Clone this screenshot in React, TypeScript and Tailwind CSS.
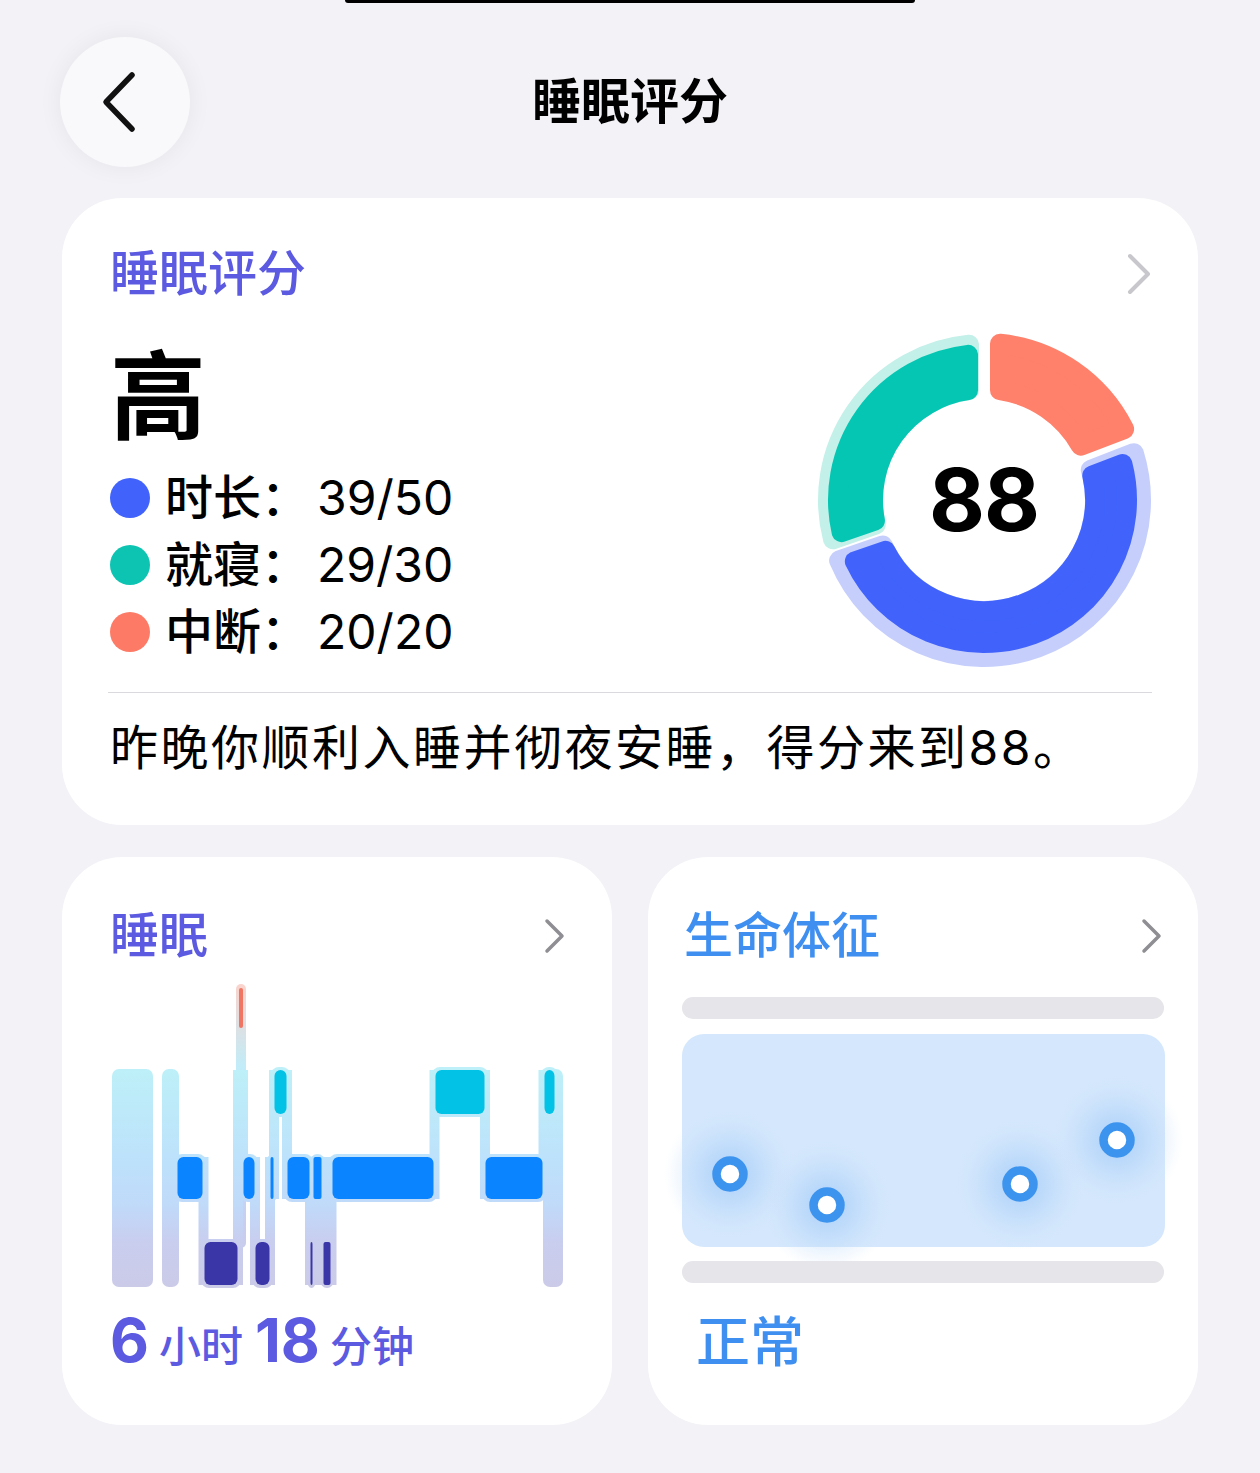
import React from "react";

const FONT = "font-['Inter','Noto_Sans_CJK_SC',sans-serif]";

// ---------- score ring ----------
const C = 170;

function pt(theta: number, d: number, R: number): [number, number] {
  const t = (theta * Math.PI) / 180;
  const along = Math.sqrt(R * R - d * d);
  return [
    C + along * Math.sin(t) + d * Math.cos(t),
    C - along * Math.cos(t) + d * Math.sin(t),
  ];
}

function angOf(p: [number, number]) {
  const a = (Math.atan2(p[0] - C, -(p[1] - C)) * 180) / Math.PI;
  return (a + 360) % 360;
}

function sector(a0: number, a1: number, rIn: number, rOut: number, d0: number, d1: number) {
  const p1 = pt(a0, d0, rOut);
  const p2 = pt(a1, -d1, rOut);
  const p3 = pt(a1, -d1, rIn);
  const p4 = pt(a0, d0, rIn);
  const so = (angOf(p2) - angOf(p1) + 360) % 360;
  const si = (angOf(p3) - angOf(p4) + 360) % 360;
  const f = (p: [number, number]) => `${p[0].toFixed(2)} ${p[1].toFixed(2)}`;
  return `M${f(p1)} A${rOut} ${rOut} 0 ${so > 180 ? 1 : 0} 1 ${f(p2)} L${f(p3)} A${rIn} ${rIn} 0 ${si > 180 ? 1 : 0} 0 ${f(p4)} Z`;
}

function ScoreRing() {
  const k = 10;
  const segs = [
    // halos
    { d: sector(251, 360, 101 + k, 166 - k, 12, 15), c: "#c3f0e8" },
    { d: sector(69, 251, 101 + k, 167 - k, 10, 10), c: "#c6cffc" },
    // solid parts
    { d: sector(251, 360, 101 + k, 156 - k, 6 + k, 6 + k), c: "#05c6b2" },
    { d: sector(0, 69, 101 + k, 167 - k, 6 + k, 6 + k), c: "#ff806b" },
    { d: sector(69, 251, 101 + k, 153 - k, 6 + k, 6 + k), c: "#4163fc" },
  ];
  return (
    <div className="relative mr-[-4px] h-[340px] w-[340px] shrink-0">
      <svg width="340" height="340" viewBox="0 0 340 340">
        {segs.map((s, i) => (
          <path key={i} d={s.d} fill={s.c} stroke={s.c} strokeWidth={k * 2} strokeLinejoin="round" />
        ))}
      </svg>
      <div className="absolute inset-0 flex items-center justify-center">
        <span className="text-[86px] font-bold leading-none tracking-[-1px] text-black">88</span>
      </div>
    </div>
  );
}

// ---------- sleep chart ----------
type Lv = "A" | "B" | "C" | "D";
const LV: Record<Lv, [number, number]> = {
  A: [8, 48],
  B: [90, 134],
  C: [177, 219],
  D: [262, 305],
};
const FILL: Record<Lv, string> = {
  A: "#f07563",
  B: "#02c2e6",
  C: "#0a84ff",
  D: "#3a36a8",
};

const blocks: [number, number, Lv][] = [
  [67, 93, "C"],
  [94, 128, "D"],
  [128, 133, "A"],
  [133, 145, "C"],
  [145, 160, "D"],
  [160, 164, "C"],
  [164, 177, "B"],
  [177, 200, "C"],
  [200, 203, "D"],
  [203, 212, "C"],
  [213, 221, "D"],
  [222, 324, "C"],
  [325, 375, "B"],
  [375, 433, "C"],
  [434, 445, "B"],
];

function SleepChart() {
  const connectors = blocks.slice(0, -1).map((b, i) => {
    const n = blocks[i + 1];
    const x = (b[1] + n[0]) / 2;
    const top = Math.min(LV[b[2]][0], LV[n[2]][0]);
    const bot = Math.max(LV[b[2]][1], LV[n[2]][1]);
    return { x, top: Math.max(top, 90), bot };
  });
  return (
    <svg width="455" height="310" viewBox="0 0 455 310" className="mt-[14px] overflow-visible">
      <defs>
        <linearGradient id="lt" gradientUnits="userSpaceOnUse" x1="0" y1="89" x2="0" y2="307">
          <stop offset="0" stopColor="#bdf0f8" />
          <stop offset="0.4" stopColor="#bde2fb" />
          <stop offset="0.62" stopColor="#c0dafa" />
          <stop offset="0.8" stopColor="#c9cdee" />
          <stop offset="1" stopColor="#cbcbe8" />
        </linearGradient>
        <linearGradient id="rd" gradientUnits="userSpaceOnUse" x1="0" y1="4" x2="0" y2="307">
          <stop offset="0" stopColor="#fbd3cc" />
          <stop offset="0.27" stopColor="#c2ecf8" />
          <stop offset="0.45" stopColor="#bde2fb" />
          <stop offset="0.62" stopColor="#c0dafa" />
          <stop offset="0.8" stopColor="#c9cdee" />
          <stop offset="1" stopColor="#cbcbe8" />
        </linearGradient>
      </defs>
      {/* columns */}
      <rect x="2" y="89" width="41" height="218" rx="7" fill="url(#lt)" />
      <rect x="52" y="89" width="17" height="218" rx="7" fill="url(#lt)" />
      <rect x="433" y="89" width="20" height="218" rx="7" fill="url(#lt)" />
      <rect x="126" y="4" width="10" height="264" rx="5" fill="url(#rd)" />
      {/* halos */}
      {blocks.map(([a, b, l], i) =>
        l === "A" ? null : (
          <rect key={`h${i}`} x={a - 3} y={LV[l][0] - 3} width={b - a + 6} height={LV[l][1] - LV[l][0] + 6} rx="8" fill="url(#lt)" />
        )
      )}
      {connectors.map((c, i) => (
        <rect key={`c${i}`} x={c.x - 5} y={c.top} width="10" height={c.bot - c.top} fill="url(#lt)" />
      ))}
      {/* blocks */}
      {blocks.map(([a, b, l], i) =>
        l === "A" ? (
          <rect key={`b${i}`} x="129" y="8" width="4" height="40" rx="2" fill={FILL.A} />
        ) : (
          <rect
            key={`b${i}`}
            x={a + 0.5}
            y={LV[l][0]}
            width={Math.max(b - a - 1, 2)}
            height={LV[l][1] - LV[l][0]}
            rx={b - a > 10 ? 6 : 2}
            fill={FILL[l]}
          />
        )
      )}
    </svg>
  );
}

// ---------- vitals ----------
const dots: [number, number][] = [
  [48, 140],
  [145, 171],
  [338, 150],
  [435, 106],
];

function VitalsPanel() {
  return (
    <svg width="483" height="213" viewBox="0 0 483 213" className="mt-[15px] overflow-visible">
      <defs>
        <radialGradient id="glow">
          <stop offset="0" stopColor="#9fc8f8" stopOpacity="0.85" />
          <stop offset="0.5" stopColor="#b5d6fa" stopOpacity="0.5" />
          <stop offset="1" stopColor="#d4e7fc" stopOpacity="0" />
        </radialGradient>
      </defs>
      <rect x="0" y="0" width="483" height="213" rx="22" fill="#d4e7fc" />
      {dots.map(([x, y], i) => (
        <circle key={`g${i}`} cx={x} cy={y} r="66" fill="url(#glow)" />
      ))}
      {dots.map(([x, y], i) => (
        <circle key={`d${i}`} cx={x} cy={y} r="13.5" fill="#ffffff" stroke="#3d94ef" strokeWidth="8.5" />
      ))}
    </svg>
  );
}

function Chevron({ color, w }: { color: string; w: number }) {
  return (
    <svg width="26" height="44" viewBox="0 0 26 44" fill="none">
      <path d="M4 4 L22 22 L4 40" stroke={color} strokeWidth={w} strokeLinecap="round" strokeLinejoin="round" />
    </svg>
  );
}

function SmallChevron() {
  return (
    <svg width="22" height="36" viewBox="0 0 22 36" fill="none">
      <path d="M4 3 L19 18 L4 33" stroke="#8e8e93" strokeWidth="3.5" strokeLinecap="round" strokeLinejoin="round" />
    </svg>
  );
}

const legend = [
  { c: "bg-[#4163fc]", k: "时长", v: "39/50" },
  { c: "bg-[#0dc4b3]", k: "就寝", v: "29/30" },
  { c: "bg-[#fd7b66]", k: "中断", v: "20/20" },
];

export default function App() {
  return (
    <div className={`min-h-[1473px] w-[1260px] bg-[#f2f2f7] ${FONT} text-black`}>
      <div className="flex justify-center">
        <div className="h-[3px] w-[570px] rounded-b-[3px] bg-black" />
      </div>

      {/* header */}
      <header className="flex h-[195px] items-start px-[60px] pt-[34px]">
        <button className="flex h-[130px] w-[130px] items-center justify-center rounded-full bg-[#f9f9fb] shadow-[0_0_24px_rgba(0,0,0,0.06)]">
          <svg width="40" height="62" viewBox="0 0 40 62" fill="none" className="ml-[-10px]">
            <path d="M32 4 L6 31 L32 58" stroke="#111" strokeWidth="5.5" strokeLinecap="round" strokeLinejoin="round" />
          </svg>
        </button>
        <h1 className="flex h-[130px] flex-1 items-center justify-center text-[49px] font-semibold">睡眠评分</h1>
        <div className="w-[130px]" />
      </header>

      {/* score card */}
      <section className="mx-[62px] h-[627px] rounded-[60px] bg-white px-[48px] pt-[46px]">
        <div className="flex h-[60px] items-center justify-between">
          <h2 className="text-[49px] font-medium leading-[60px] text-[#5b5ae0]">睡眠评分</h2>
          <div className="mr-[-2px]">
            <Chevron color="#c7c7cc" w={4} />
          </div>
        </div>
        <div className="mt-[26px] flex h-[340px] justify-between">
          <div className="flex flex-col">
            <div className="mt-[18px] text-[96px] font-bold leading-[96px]">高</div>
            <div className="mt-[20px] flex flex-col">
              {legend.map((l) => (
                <div key={l.k} className="flex h-[67px] items-center">
                  <span className={`h-[40px] w-[40px] rounded-full ${l.c}`} />
                  <span className="ml-[15px] text-[48px] font-medium">{l.k}：</span>
                  <span className="ml-[8px] text-[48px]">{l.v}</span>
                </div>
              ))}
            </div>
          </div>
          <ScoreRing />
        </div>
        <div className="mx-[-2px] mt-[22px] border-t border-[#d9d9de]" />
        <p className="mt-[25px] text-[48px] leading-[60px] tracking-[2.5px]">昨晚你顺利入睡并彻夜安睡，得分来到88。</p>
      </section>

      {/* bottom cards */}
      <div className="mx-[62px] mt-[32px] flex gap-[36px]">
        <section className="flex h-[568px] w-[550px] flex-col rounded-[60px] bg-white pl-[48px] pr-[47px] pt-[49px]">
          <div className="flex h-[60px] items-center justify-between">
            <h2 className="text-[49px] font-medium leading-[60px] text-[#5b5ae0]">睡眠</h2>
            <SmallChevron />
          </div>
          <SleepChart />
          <div className="mt-[14px] flex items-baseline text-[#5b5ae0]">
            <span className="text-[60px] font-bold leading-[72px]">6</span>
            <span className="ml-[10px] text-[42px] font-medium">小时</span>
            <span className="ml-[12px] text-[60px] font-bold leading-[72px]">18</span>
            <span className="ml-[10px] text-[42px] font-medium">分钟</span>
          </div>
        </section>

        <section className="flex h-[568px] w-[550px] flex-col rounded-[60px] bg-white px-[34px] pt-[49px]">
          <div className="flex h-[60px] items-center justify-between pl-[2px]">
            <h2 className="text-[49px] font-medium leading-[60px] text-[#3f8ff0]">生命体征</h2>
            <div className="mr-[2px]">
              <SmallChevron />
            </div>
          </div>
          <div className="mt-[31px] h-[22px] rounded-full bg-[#e5e5ea]" />
          <VitalsPanel />
          <div className="mt-[14px] h-[22px] rounded-full bg-[#e5e5ea]" />
          <div className="mt-[28px] pl-[14px] text-[54px] font-medium leading-[64px] text-[#3f8ff0]">正常</div>
        </section>
      </div>
    </div>
  );
}
